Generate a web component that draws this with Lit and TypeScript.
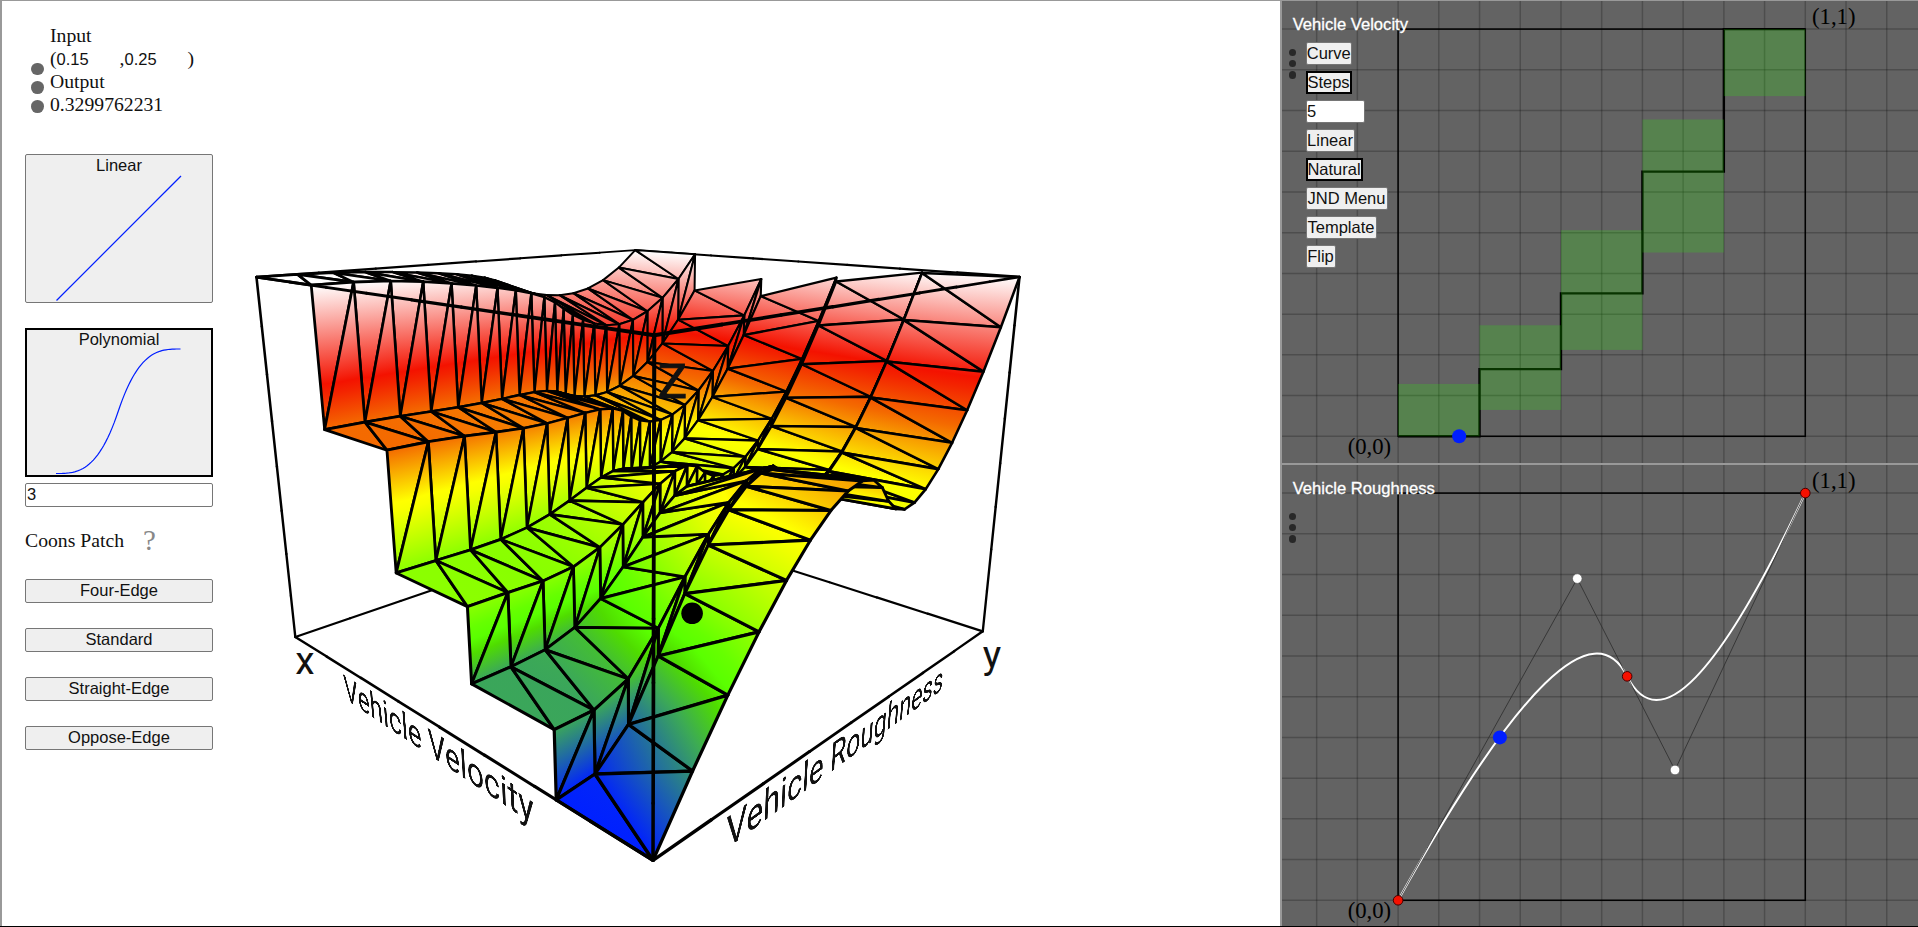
import { LitElement, html, svg, css } from "lit";
import { customElement, property } from "lit/decorators.js";

type Pt = [number, number];

/* ---------- transfer curves ---------- */

const STEP_LEVELS = [0, 0.165, 0.351, 0.65, 1];
const QUADS: [Pt, Pt, Pt][] = [
  [[0, 0], [0.44, 0.79], [0.5625, 0.55]],
  [[0.5625, 0.55], [0.68, 0.32], [1, 1]],
];

const quadAt = ([a, b, c]: [Pt, Pt, Pt], t: number): Pt => {
  const s = 1 - t;
  return [
    s * s * a[0] + 2 * s * t * b[0] + t * t * c[0],
    s * s * a[1] + 2 * s * t * b[1] + t * t * c[1],
  ];
};

const curveAt = (u: number): Pt => (u <= 0.5 ? quadAt(QUADS[0], u * 2) : quadAt(QUADS[1], u * 2 - 1));

/* ---------- camera ---------- */

const ORIGIN: Pt = [652.7, 860];
const AX: Pt = [-215.2, 84.2];
const AY: Pt = [826.9, 90.3];
const AZ: Pt = [-95.5, -574.6];
const W = [0.483, 0.506, -0.148];

const depth = (x: number, y: number, z: number) => 1 + W[0] * x + W[1] * y + W[2] * z;
const project = (x: number, y: number, z: number): Pt => {
  const w = depth(x, y, z);
  return [
    (ORIGIN[0] + AX[0] * x + AY[0] * y + AZ[0] * z) / w,
    (ORIGIN[1] + AX[1] * x + AY[1] * y + AZ[1] * z) / w,
  ];
};

const PLOT_X = 219.7;
const PLOT_Y = 0.7;

/* Places flat text on one of the two vertical front planes of the box. */
const planeMatrix = (axis: Pt, wAxis: number, start: number, dir: number, z0: number, su: number, sv: number) => {
  const u = [axis[0] * su * dir, axis[1] * su * dir, wAxis * su * dir];
  const v = [-AZ[0] * sv, -AZ[1] * sv, -W[2] * sv];
  const o = [
    ORIGIN[0] + axis[0] * start + AZ[0] * z0,
    ORIGIN[1] + axis[1] * start + AZ[1] * z0,
    1 + wAxis * start + W[2] * z0,
  ];
  for (const c of [u, v, o]) {
    c[0] -= PLOT_X * c[2];
    c[1] -= PLOT_Y * c[2];
  }
  const n = (k: number) => (k / o[2]).toFixed(8);
  return `matrix3d(${n(u[0])},${n(u[1])},0,${n(u[2])},${n(v[0])},${n(v[1])},0,${n(v[2])},0,0,1,0,${n(o[0])},${n(o[1])},0,1)`;
};

/* ---------- surface ---------- */

const COLOR_STOPS: [number, string][] = [
  [0, "#0020ff"],
  [0.17, "#3caa55"],
  [0.235, "#4fdc00"],
  [0.27, "#5aff00"],
  [0.3, "#66ff00"],
  [0.5, "#f8ff00"],
  [0.52, "#ffff00"],
  [0.65, "#f46a00"],
  [0.735, "#f32400"],
  [0.76, "#f41200"],
  [1, "#ffffff"],
];

interface Vertex { p: Pt; z: number; w: number; }

const surfaceVertex = (x: number, level: number, [y, g]: Pt): Vertex => {
  const a = x ** 3;
  const b = y ** 3;
  const z = a + b === 0 ? 0 : (a * level + b * g) / (a + b);
  return { p: project(x, y, z), z, w: depth(x, y, z) };
};

const f1 = (n: number) => n.toFixed(2);

const buildSurface = () => {
  const rows: Vertex[][] = [];
  const samples: Pt[] = Array.from({ length: 22 }, (_, k) => curveAt(k / 21));
  STEP_LEVELS.forEach((level, i) => {
    rows.push(samples.map((s) => surfaceVertex(i / 5, level, s)));
    rows.push(samples.map((s) => surfaceVertex((i + 1) / 5, level, s)));
  });
  const defs: unknown[] = [];
  const faces: unknown[] = [];
  let id = 0;
  const face = (t: Vertex[]) => {
    const [a, b, c] = t;
    const w = (a.w + b.w + c.w) / 3;
    const x1 = b.p[0] - a.p[0], y1 = b.p[1] - a.p[1], z1 = b.z - a.z;
    const x2 = c.p[0] - a.p[0], y2 = c.p[1] - a.p[1], z2 = c.z - a.z;
    const det = x1 * y2 - x2 * y1;
    const gx = (z1 * y2 - z2 * y1) / det;
    const gy = (x1 * z2 - x2 * z1) / det;
    const g2 = gx * gx + gy * gy;
    let fill = "#3caa55";
    if (Math.abs(det) > 1e-6 && g2 > 1e-12) {
      const k0 = -a.z / g2;
      const k1 = (1 - a.z) / g2;
      const name = `g${id++}`;
      defs.push(svg`<linearGradient id=${name} href="#ramp" gradientUnits="userSpaceOnUse"
        x1=${f1(a.p[0] + gx * k0)} y1=${f1(a.p[1] + gy * k0)}
        x2=${f1(a.p[0] + gx * k1)} y2=${f1(a.p[1] + gy * k1)}></linearGradient>`);
      fill = `url(#${name})`;
    } else {
      const stop = COLOR_STOPS.reduce((m, s) => (Math.abs(s[0] - a.z) < Math.abs(m[0] - a.z) ? s : m));
      fill = stop[1];
    }
    faces.push(svg`<polygon points=${t.map((v) => v.p.map(f1).join(",")).join(" ")} fill=${fill} stroke-width=${f1(3.5 / w)}></polygon>`);
  };
  for (let i = rows.length - 2; i >= 0; i--) {
    for (let k = samples.length - 2; k >= 0; k--) {
      const a = rows[i][k], b = rows[i][k + 1], c = rows[i + 1][k], d = rows[i + 1][k + 1];
      face([a, d, c]);
      face([a, b, d]);
    }
  }
  return { defs, faces };
};

/* Box edges are drawn in short pieces so that they taper with distance. */
const edge = (a: number[], b: number[]) => {
  const n = 8;
  const at = (t: number) => a.map((v, i) => v + (b[i] - v) * t) as [number, number, number];
  return Array.from({ length: n }, (_, i) => {
    const p = project(...at(i / n));
    const q = project(...at((i + 1) / n));
    return svg`<line x1=${f1(p[0])} y1=${f1(p[1])} x2=${f1(q[0])} y2=${f1(q[1])}
      stroke-width=${f1(3.5 / depth(...at((i + 0.5) / n)))}></line>`;
  });
};

const BACK_EDGES = [
  [[1, 0, 0], [1, 1, 0]], [[0, 1, 0], [1, 1, 0]], [[1, 0, 1], [1, 1, 1]], [[0, 1, 1], [1, 1, 1]],
  [[1, 0, 0], [1, 0, 1]], [[0, 1, 0], [0, 1, 1]],
];
const FRONT_EDGES = [
  [[0, 0, 0], [1, 0, 0]], [[0, 0, 0], [0, 1, 0]], [[0, 0, 0], [0, 0, 1]],
  [[0, 0, 1], [1, 0, 1]], [[0, 0, 1], [0, 1, 1]],
];

@customElement("surface-plot")
export class SurfacePlot extends LitElement {
  static styles = css`
    :host { display: block; position: relative; overflow: hidden; }
    .scene { display: block; width: 1060px; height: 925px; }
    .mesh { stroke: #000; stroke-linejoin: round; }
    .box { stroke: #000; stroke-linecap: round; }
    .tick { font-family: Roboto, sans-serif; fill: #111; }
    .height { stroke: #111; stroke-width: 1; }
    .axis {
      position: absolute; left: 0; top: 0; transform-origin: 0 0;
      font: 100px/100px Roboto, sans-serif; color: #111; white-space: nowrap;
    }
  `;

  render() {
    const { defs, faces } = buildSurface();
    return html`
      <svg class="scene" viewBox="219.7 0.7 1060 925">
        <defs>
          <linearGradient id="ramp">
            ${COLOR_STOPS.map(([o, c]) => svg`<stop offset=${o} stop-color=${c}></stop>`)}
          </linearGradient>
          ${defs}
        </defs>
        <g class="box">${BACK_EDGES.map(([a, b]) => edge(a, b))}</g>
        <g class="mesh">${faces}</g>
        <g class="box">${FRONT_EDGES.map(([a, b]) => edge(a, b))}</g>
        <text class="tick height" x="657.5" y="397.5" font-size="49">Z</text>
        <text class="tick" x="295" y="673.5" font-size="39">x</text>
        <text class="tick" x="982.5" y="667.5" font-size="39">y</text>
        <circle cx="691.8" cy="613" r="10.8"></circle>
      </svg>
      <span class="axis" style="transform:${planeMatrix(AX, W[0], 0.8185, -1, -0.0105, 0.000805, 0.00104)}">Vehicle Velocity</span>
      <span class="axis" style="transform:${planeMatrix(AY, W[1], 0.1605, 1, -0.0075, 0.000802, 0.00107)}">Vehicle Roughness</span>
    `;
  }
}

/* ---------- curve editors ---------- */

const BX = 116.1, BY = 435.3, SIDE = 407.2;
const px = (x: number) => BX + x * SIDE;
const py = (y: number) => BY - y * SIDE;

const BANDS: Pt[] = [[0, 0.1286], [0.0647, 0.2727], [0.2121, 0.5061], [0.4513, 0.778], [0.8354, 1]];

const MENU: { text: string; width: number; kind?: string }[] = [
  { text: "Curve", width: 46.5 },
  { text: "Steps", width: 46, kind: "on" },
  { text: "5", width: 59, kind: "field" },
  { text: "Linear", width: 49 },
  { text: "Natural", width: 57, kind: "on" },
  { text: "JND Menu", width: 82 },
  { text: "Template", width: 71 },
  { text: "Flip", width: 30 },
];

@customElement("curve-panel")
export class CurvePanel extends LitElement {
  @property() heading = "";
  @property() mode: "steps" | "curve" = "curve";

  static styles = css`
    :host { display: grid; background: #636363; overflow: hidden; height: 462px; }
    .graph, .overlay { grid-area: 1 / 1; }
    .graph { display: block; width: 636px; height: 462px; }
    .grid { stroke: #000; stroke-opacity: 0.22; stroke-width: 1.5; }
    .frame { fill: none; stroke: #000; stroke-width: 1.5; }
    .corner { font: 22.7px "Liberation Serif", serif; fill: #000; }
    .steps { fill: none; stroke: #000; stroke-width: 2.4; }
    .band { fill: rgb(40 245 0 / 0.21); }
    .handle { fill: none; stroke: #2c2c2c; stroke-width: 0.8; }
    .curve { fill: none; stroke: #fff; stroke-width: 2; }
    .knot { fill: #f51000; stroke: #400; stroke-width: 1; }
    .ctrl { fill: #fff; stroke: #444; stroke-width: 0.6; }
    .cursor { fill: #001eff; }
    .overlay { display: grid; grid-template-columns: 23.5px auto; align-content: start; padding-top: 13px; z-index: 1; }
    .title {
      grid-column: 1 / 3; padding-left: 10.7px; font: 16.6px/22px "Liberation Sans", sans-serif; color: #fff;
      height: 28px; white-space: nowrap; -webkit-text-stroke: 0.3px #fff;
    }
    .dots { display: flex; flex-direction: column; gap: 3.7px; padding: 6.6px 0 0 6.6px; }
    .dots i { width: 7.6px; height: 7.6px; border-radius: 50%; background: #282828; }
    .menu { display: flex; flex-direction: column; gap: 6px; }
    .item {
      box-sizing: border-box; height: 23px; border: 1px solid #767676; border-radius: 2px;
      background: #efefef; color: #111; font: 16.5px/20px "Liberation Sans", sans-serif;
      text-align: center; white-space: nowrap; display: flex; justify-content: center;
    }
    .on { border: 2px solid #000; border-radius: 0; line-height: 18px; }
    .field { background: #fff; justify-content: start; padding-left: 0.5px; }
  `;

  private steps() {
    const d = STEP_LEVELS.map((l, i) => `${i ? "L" : "M"}${px(i / 5)} ${py(l)}L${px((i + 1) / 5)} ${py(l)}`).join("");
    return svg`
      <path class="steps" d=${d}></path>
      ${BANDS.map(([lo, hi], i) => svg`<rect class="band" x=${px(i / 5)} y=${py(hi)} width=${SIDE / 5} height=${(hi - lo) * SIDE}></rect>`)}
      <circle class="cursor" cx=${px(0.15)} cy=${py(0)} r="7"></circle>`;
  }

  private curve() {
    const at = ([x, y]: Pt) => `${px(x)} ${py(y)}`;
    const [a, b] = QUADS;
    const all: Pt[] = [a[0], a[1], a[2], b[1], b[2]];
    return svg`
      <path class="curve" d="M${at(a[0])}Q${at(a[1])} ${at(a[2])}Q${at(b[1])} ${at(b[2])}"></path>
      <polyline class="handle" points=${all.map(at).join(" ")}></polyline>
      ${[a[0], a[2], b[2]].map(([x, y]) => svg`<circle class="knot" cx=${px(x)} cy=${py(y)} r="4.8"></circle>`)}
      ${[a[1], b[1]].map(([x, y]) => svg`<circle class="ctrl" cx=${px(x)} cy=${py(y)} r="4.8"></circle>`)}
      <circle class="cursor" cx=${px(0.25)} cy=${py(0.4)} r="7"></circle>`;
  }

  render() {
    const cols = Array.from({ length: 15 }, (_, i) => px((i - 2) / 10)).filter((x) => x < 636);
    const rows = Array.from({ length: 11 }, (_, i) => py(i / 10));
    return html`
      <svg class="graph" viewBox="0 0 636 462">
        <g class="grid">
          ${cols.map((x) => svg`<line x1=${x} x2=${x} y1="0" y2="462"></line>`)}
          ${rows.map((y) => svg`<line x1="0" x2="636" y1=${y} y2=${y}></line>`)}
        </g>
        <rect class="frame" x=${px(0)} y=${py(1)} width=${SIDE} height=${SIDE}></rect>
        <text class="corner" x="530" y="23">(1,1)</text>
        <text class="corner" x="65.7" y="452.5">(0,0)</text>
        ${this.mode === "steps" ? this.steps() : this.curve()}
      </svg>
      <div class="overlay">
        <div class="title">${this.heading}</div>
        <div class="dots"><i></i><i></i><i></i></div>
        ${this.mode === "steps"
          ? html`<div class="menu">
              ${MENU.map((m) => html`<div class="item ${m.kind ?? ""}" style="width:${m.width}px">${m.text}</div>`)}
            </div>`
          : null}
      </div>`;
  }
}

/* ---------- page ---------- */

const POLY = Array.from({ length: 61 }, (_, i) => {
  const t = i / 60;
  const v = t < 0.5 ? 4 * t ** 3 : 1 - 4 * (1 - t) ** 3;
  return `${(t * 124.5).toFixed(2)},${(124.5 - v * 124.5).toFixed(2)}`;
}).join(" ");

@customElement("app-root")
export class AppRoot extends LitElement {
  static styles = css`
    :host {
      display: grid; grid-template-columns: 1280px 638px; width: 1918px; height: 927px;
      box-sizing: border-box; border-bottom: 1px solid #000; background: #fff; overflow: hidden;
      color: #111;
    }
    .main {
      box-sizing: border-box; border-left: 2px solid #999; border-top: 1px solid #999;
      display: grid; grid-template-columns: 218px 1060px; height: 926px;
    }
    .side { box-sizing: border-box; border-left: 2px solid #999; height: 926px; overflow: hidden; }
    .side curve-panel { border-top: 1px solid #999; }
    .side curve-panel + curve-panel { border-top-width: 2px; }
    .controls { padding-left: 23px; width: 188px; font: 19.7px/23px "Liberation Serif", serif; }
    .readout { display: flex; padding: 23px 0 0 6px; gap: 6.2px; height: 130px; }
    .dots { display: flex; flex-direction: column; gap: 6px; padding-top: 38.5px; }
    .dots i { width: 12.8px; height: 12.8px; border-radius: 50%; background: #666; }
    .pair { display: flex; height: 23px; }
    .num { width: 63px; }
    .num, .btn, .card, .entry { font: 16.5px/25px "Liberation Sans", sans-serif; }
    .card, .btn, .entry { box-sizing: border-box; border: 1px solid #767676; border-radius: 2px; background: #efefef; }
    .card { height: 149px; display: flex; flex-direction: column; align-items: center; line-height: 20px; overflow: hidden; }
    .card svg { display: block; width: 126px; height: 126px; overflow: visible; }
    .card polyline { fill: none; stroke: #001eff; stroke-width: 1.2; }
    .caption { height: 21px; line-height: 21px; padding: 0; }
    .active { border: 2px solid #000; border-radius: 0; margin-top: 25px; }
    .active .caption { height: 20px; line-height: 19px; }
    .entry { height: 24px; margin-top: 6px; background: #fff; padding-left: 1px; line-height: 21px; }
    .coons { display: flex; align-items: center; height: 24px; margin: 21px 0 27px; white-space: nowrap; }
    .help { color: #888; font-size: 29px; margin-left: 19px; }
    .btns { display: flex; flex-direction: column; gap: 25px; }
    .btn { height: 24px; text-align: center; line-height: 21px; }
  `;

  render() {
    return html`
      <div class="main">
        <div class="controls">
          <div class="readout">
            <div class="dots"><i></i><i></i><i></i></div>
            <div>
              <div>Input</div>
              <div class="pair"><span>(</span><span class="num">0.15</span><span>,</span><span class="num">0.25</span><span>)</span></div>
              <div>Output</div>
              <div>0.3299762231</div>
            </div>
          </div>
          <div class="card">
            <div class="caption">Linear</div>
            <svg viewBox="0 0 126 126"><polyline points="0.5,124.5 125,0"></polyline></svg>
          </div>
          <div class="card active">
            <div class="caption">Polynomial</div>
            <svg viewBox="0 0 126 126"><polyline points=${POLY}></polyline></svg>
          </div>
          <div class="entry">3</div>
          <div class="coons">Coons Patch<span class="help">?</span></div>
          <div class="btns">
            ${["Four-Edge", "Standard", "Straight-Edge", "Oppose-Edge"].map((t) => html`<div class="btn">${t}</div>`)}
          </div>
        </div>
        <surface-plot></surface-plot>
      </div>
      <div class="side">
        <curve-panel heading="Vehicle Velocity" mode="steps"></curve-panel>
        <curve-panel heading="Vehicle Roughness" mode="curve"></curve-panel>
      </div>
    `;
  }
}
